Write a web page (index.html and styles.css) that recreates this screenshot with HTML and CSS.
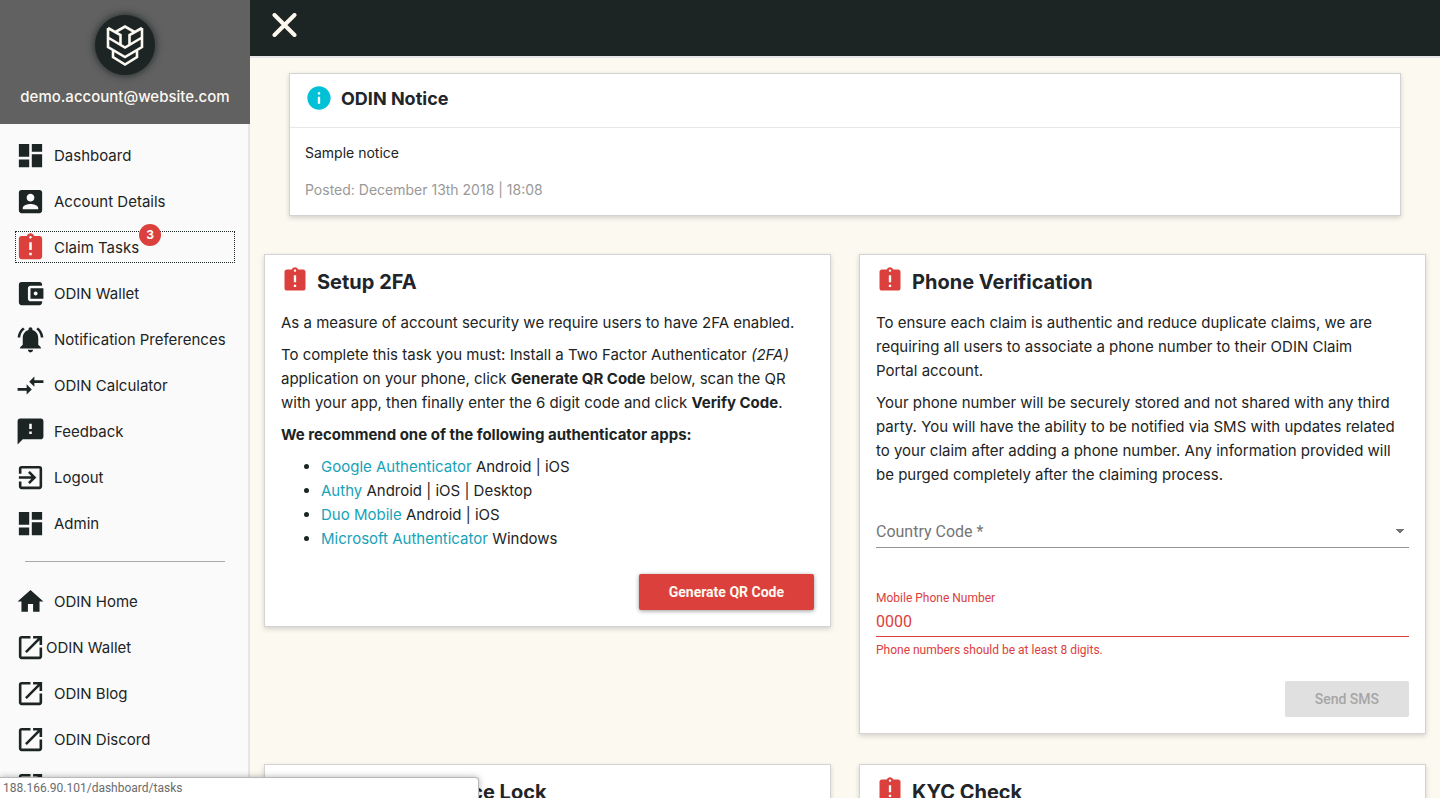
FILE: index.html
```html
<!DOCTYPE html>
<html lang="en">
<head>
<meta charset="utf-8">
<title>ODIN Claim Portal</title>
<link rel="stylesheet" href="styles.css">
</head>
<body>
<svg class="sprite" aria-hidden="true">
  <symbol id="dashboard" viewBox="0 0 24 24"><path d="M3 13h8V3H3v10zm0 8h8v-6H3v6zm10 0h8V11h-8v10zm0-18v6h8V3h-8z"/></symbol>
  <symbol id="account" viewBox="0 0 24 24"><path d="M3 5v14c0 1.100.89 2 2 2h14c1.100 0 2-.9 2-2V5c0-1.100-.9-2-2-2H5c-1.110 0-2 .9-2 2zm12 4c0 1.660-1.340 3-3 3s-3-1.340-3-3 1.340-3 3-3 3 1.340 3 3zm-9 8c0-2 4-3.100 6-3.100s6 1.100 6 3.100v1H6v-1z"/></symbol>
  <symbol id="task" viewBox="0 0 24 24"><path d="M19 3h-4.180C14.400 1.840 13.300 1 12 1c-1.300 0-2.400.84-2.820 2H5c-1.100 0-2 .9-2 2v14c0 1.100.9 2 2 2h14c1.100 0 2-.9 2-2V5c0-1.100-.9-2-2-2zm-6 15h-2v-2h2v2zm0-4h-2V8h2v6zm-1-9c-.55 0-1-.45-1-1s.45-1 1-1 1 .45 1 1-.45 1-1 1z"/></symbol>
  <symbol id="wallet" viewBox="0 0 24 24"><path d="M21 18v1c0 1.100-.9 2-2 2H5c-1.110 0-2-.9-2-2V5c0-1.100.89-2 2-2h14c1.100 0 2 .9 2 2v1h-9c-1.110 0-2 .9-2 2v8c0 1.100.89 2 2 2h9zm-9-2h10V8H12v8zm4-2.500c-.83 0-1.500-.67-1.500-1.500s.67-1.500 1.500-1.500 1.500.67 1.500 1.500-.67 1.500-1.500 1.500z"/></symbol>
  <symbol id="bell" viewBox="0 0 24 24"><path d="M7.580 4.080L6.150 2.650C3.750 4.480 2.170 7.300 2.030 10.500h2c.15-2.650 1.510-4.970 3.550-6.420zm12.390 6.420h2c-.15-3.200-1.730-6.020-4.120-7.850l-1.420 1.430c2.020 1.450 3.390 3.770 3.540 6.420zM18 11c0-3.070-1.640-5.640-4.500-6.320V4c0-.83-.67-1.500-1.500-1.500s-1.500.67-1.500 1.500v.68C7.630 5.360 6 7.920 6 11v5l-2 2v1h16v-1l-2-2v-5zm-6 11c.14 0 .27-.01.4-.04.65-.14 1.180-.58 1.440-1.180.1-.24.15-.5.15-.78h-4c.01 1.100.9 2 2.010 2z"/></symbol>
  <symbol id="compare" viewBox="0 0 24 24"><path d="M9.010 14H2v2h7.010v3L13 15l-3.990-4v3zm5.980-1v-3H22V8h-7.010V5L11 9l3.990 4z"/></symbol>
  <symbol id="feedback" viewBox="0 0 24 24"><path d="M20 2H4c-1.100 0-1.990.9-1.990 2L2 22l4-4h14c1.100 0 2-.9 2-2V4c0-1.100-.9-2-2-2zm-7 12h-2v-2h2v2zm0-4h-2V6h2v4z"/></symbol>
  <symbol id="logout" viewBox="0 0 24 24"><path d="M10.090 15.590L11.500 17l5-5-5-5-1.410 1.410L12.670 11H3v2h9.670l-2.580 2.590zM19 3H5c-1.110 0-2 .9-2 2v4h2V5h14v14H5v-4H3v4c0 1.100.89 2 2 2h14c1.100 0 2-.9 2-2V5c0-1.100-.9-2-2-2z"/></symbol>
  <symbol id="home" viewBox="0 0 24 24"><path d="M10 20v-6h4v6h5v-8h3L12 3 2 12h3v8z"/></symbol>
  <symbol id="external" viewBox="0 0 24 24"><path d="M19 19H5V5h7V3H5c-1.110 0-2 .9-2 2v14c0 1.100.89 2 2 2h14c1.100 0 2-.9 2-2v-7h-2v7zM14 3v2h3.590l-9.830 9.830 1.410 1.410L19 6.410V10h2V3h-7z"/></symbol>
  <symbol id="info" viewBox="0 0 24 24"><path d="M12 2C6.480 2 2 6.480 2 12s4.480 10 10 10 10-4.480 10-10S17.520 2 12 2zm1 15h-2v-6h2v6zm0-8h-2V7h2v2z"/></symbol>
</svg>
<div class="app">
  <aside class="sidebar">
    <header class="profile">
      <div class="avatar">
        <svg class="logo" viewBox="0 0 60 60" aria-label="ODIN"><path d="M13 13L25.500 20V30M47 13L34.500 20V30M13 13V32L30 42 47 32V13M13 22.500L30 32.500 47 22.500M20.500 17L30 11.500 39.500 17M18 36V42L30 49.500 42 42V36"/></svg>
      </div>
      <span class="email">demo.account@website.com</span>
    </header>
    <nav class="nav">
      <a class="link" href="#"><svg><use href="#dashboard"/></svg><span>Dashboard</span></a>
      <a class="link" href="#"><svg><use href="#account"/></svg><span>Account Details</span></a>
      <a class="link focused" href="#"><svg class="alert"><use href="#task"/></svg><span>Claim Tasks<b class="badge">3</b></span></a>
      <a class="link" href="#"><svg><use href="#wallet"/></svg><span>ODIN Wallet</span></a>
      <a class="link" href="#"><svg><use href="#bell"/></svg><span>Notification Preferences</span></a>
      <a class="link" href="#"><svg><use href="#compare"/></svg><span>ODIN Calculator</span></a>
      <a class="link" href="#"><svg><use href="#feedback"/></svg><span>Feedback</span></a>
      <a class="link" href="#"><svg><use href="#logout"/></svg><span>Logout</span></a>
      <a class="link" href="#"><svg><use href="#dashboard"/></svg><span>Admin</span></a>
      <hr class="divider">
      <a class="link" href="#"><svg><use href="#home"/></svg><span>ODIN Home</span></a>
      <a class="link tight" href="#"><svg><use href="#external"/></svg><span>ODIN Wallet</span></a>
      <a class="link" href="#"><svg><use href="#external"/></svg><span>ODIN Blog</span></a>
      <a class="link" href="#"><svg><use href="#external"/></svg><span>ODIN Discord</span></a>
      <a class="link" href="#" aria-label="External link"><svg><use href="#external"/></svg></a>
    </nav>
  </aside>
  <div class="page">
    <header class="topbar">
      <button class="close" type="button" aria-label="Close menu"><svg viewBox="0 0 24 24"><path d="M2 2L22 22M22 2L2 22"/></svg></button>
    </header>
    <main class="content">
      <section class="card notice">
        <div class="notice-head"><svg class="icon info"><use href="#info"/></svg><h2>ODIN Notice</h2></div>
        <div class="notice-body">
          <p>Sample notice</p>
          <p class="posted">Posted: December 13th 2018 | 18:08</p>
        </div>
      </section>
      <div class="tasks">
        <section class="card task">
          <div class="task-head"><svg class="icon alert"><use href="#task"/></svg><h2>Setup 2FA</h2></div>
          <p>As a measure of account security we require users to have 2FA enabled.</p>
          <p>To complete this task you must: Install a Two Factor Authenticator <em>(2FA)</em> application on your phone, click <strong>Generate QR Code</strong> below, scan the QR with your app, then finally enter the 6 digit code and click <strong>Verify Code</strong>.</p>
          <p><strong>We recommend one of the following authenticator apps:</strong></p>
          <ul>
            <li><a href="#">Google Authenticator</a> Android | iOS</li>
            <li><a href="#">Authy</a> Android | iOS | Desktop</li>
            <li><a href="#">Duo Mobile</a> Android | iOS</li>
            <li><a href="#">Microsoft Authenticator</a> Windows</li>
          </ul>
          <div class="actions"><button class="button primary" type="button">Generate QR Code</button></div>
        </section>
        <section class="card task">
          <div class="task-head"><svg class="icon alert"><use href="#task"/></svg><h2>Phone Verification</h2></div>
          <p>To ensure each claim is authentic and reduce duplicate claims, we are requiring all users to associate a phone number to their ODIN Claim Portal&nbsp;account.</p>
          <p>Your phone number will be securely stored and not shared with any third party. You will have the ability to be notified via SMS with updates related to your claim after adding a phone number. Any information provided will be purged completely after the claiming process.</p>
          <form class="form">
            <select class="field country" aria-label="Country Code" required><option>Country Code *</option></select>
            <label class="label" for="phone">Mobile Phone Number</label>
            <input class="field phone" id="phone" type="text" value="0000" aria-describedby="phone-error">
            <span class="error" id="phone-error">Phone numbers should be at least 8 digits.</span>
            <div class="actions"><button class="button" type="button" disabled>Send SMS</button></div>
          </form>
        </section>
        <section class="card task">
          <div class="task-head"><svg class="icon alert"><use href="#task"/></svg><h2>Withdraw Balance Lock</h2></div>
        </section>
        <section class="card task">
          <div class="task-head"><svg class="icon alert"><use href="#task"/></svg><h2>KYC Check</h2></div>
        </section>
      </div>
    </main>
  </div>
  <div class="status">188.166.90.101/dashboard/tasks</div>
</div>
</body>
</html>
```
FILE: styles.css
```css
* { box-sizing: border-box; }
body {
  margin: 0;
  font: 15px/24px Inter, "Liberation Sans", sans-serif;
  color: #1c2424;
  background: #fcf9f1;
}
h2, p, ul { margin: 0; }
h2 { font-size: 20px; line-height: 32px; color: #212529; }
svg { flex: none; fill: currentColor; }
.sprite { position: absolute; width: 0; height: 0; }
.app { display: flex; height: 100vh; overflow: hidden; }

.sidebar {
  flex: none;
  width: 250px;
  overflow: hidden;
  background: linear-gradient(to left, #e6e6e8 2px, #fafafa 2px);
}
.profile {
  display: flex;
  flex-direction: column;
  align-items: center;
  gap: 10px;
  height: 124px;
  padding-top: 15px;
  background: #616161;
  color: #fcf8f0;
}
.avatar {
  width: 60px;
  height: 60px;
  border-radius: 50%;
  background: #1c2424;
  box-shadow: 0 0 8px #1c2424;
}
.logo { display: block; fill: none; stroke: #fcf8f0; stroke-width: 2.600; }
.email { font-weight: 500; }
.nav {
  display: flex;
  flex-direction: column;
  gap: 14px;
  padding: 15px;
}
.link {
  display: flex;
  align-items: center;
  gap: 8px;
  height: 32px;
  color: #1c2424;
  text-decoration: none;
  white-space: nowrap;
}
.link svg { width: 31px; height: 31px; }
.link span { position: relative; padding-top: 2px; }
.link.tight { gap: 0; }
.focused { outline: 1px dotted #1c2424; outline-offset: -1px; }
.link .alert, .alert { color: #db403c; }
.badge {
  position: absolute;
  left: 100%;
  top: -10px;
  width: 22px;
  height: 22px;
  border-radius: 50%;
  background: #db403c;
  color: #fff;
  font-size: 12px;
  line-height: 22px;
  text-align: center;
}
.divider {
  width: 200px;
  margin: 8px auto 9px;
  border: 0;
  border-top: 1px solid #a8a8a8;
}

.page { flex: 1; min-width: 0; }
.topbar {
  height: 58px;
  padding: 13px 22px;
  background: #1c2424;
  border-bottom: 2px solid #e6e6e8;
}
.close {
  display: block;
  padding: 0;
  border: 0;
  background: none;
  color: #fcf8f0;
}
.close svg {
  display: block;
  width: 25px;
  height: 24px;
  fill: none;
  stroke: currentColor;
  stroke-width: 4;
  stroke-linecap: round;
}
.content { padding: 15px 14px; }
.card {
  background: #fff;
  border: 1px solid #d3d3d3;
  box-shadow: 0 2px 5px rgba(0, 0, 0, .16);
}
.icon { width: 28px; height: 28px; }
.notice { margin: 0 25px 38px; }
.notice-head {
  display: flex;
  gap: 8px;
  height: 54px;
  padding: 10px 15px;
  border-bottom: 1px solid #e8e8e8;
}
.notice-head h2 { font-size: 18px; line-height: 30px; }
.info { color: #00c1d5; }
.notice-body {
  display: grid;
  gap: 13px;
  padding: 13px 15px;
  font-size: 14px;
}
.posted { color: #999; }
.tasks {
  display: grid;
  grid-template-columns: 1fr 1fr;
  gap: 30px 28px;
  align-items: start;
}
.task { padding: 11px 16px 16px; }
.task-head { display: flex; gap: 8px; margin-bottom: 13px; }
.task p { margin-bottom: 8px; }
.task ul { padding-left: 40px; }
.task a { color: #17a2b8; text-decoration: none; }
.actions { display: flex; justify-content: flex-end; padding-top: 23px; }
.button {
  height: 36px;
  padding: 0 30px;
  border: 0;
  border-radius: 2px;
  background: #e0e0e0;
  color: #a6a6a6;
  font: 500 14px Roboto, sans-serif;
}
.primary {
  background: #db403c;
  color: #fcf8f0;
  font-weight: 700;
  box-shadow: 0 1px 4px rgba(0, 0, 0, .4);
}
.form {
  display: flex;
  flex-direction: column;
  padding-top: 21px;
  font-family: Roboto, "Liberation Sans", sans-serif;
}
.field {
  width: 100%;
  height: 32px;
  padding: 0;
  border: 0;
  border-bottom: 1px solid #949494;
  border-radius: 0;
  background: none;
  color: #757575;
  font: 16px/24px Roboto, sans-serif;
}
.country {
  appearance: none;
  background: conic-gradient(from -45deg at 50% 100%, #757575 90deg, transparent 0) no-repeat right 4px top 13px / 10px 5px;
}
.label {
  margin-top: 42px;
  color: #db403c;
  font-size: 12px;
  line-height: 16px;
}
.phone { height: 31px; border-color: #db403c; color: #db403c; }
.error { margin-top: 5px; color: #db403c; font-size: 12px; line-height: 16px; }

.status {
  position: absolute;
  left: 0;
  bottom: 0;
  width: 479px;
  height: 21px;
  padding-left: 3px;
  border: 1px solid #b8b8b8;
  border-width: 1px 1px 0 0;
  border-radius: 0 4px 0 0;
  background: #fff;
  box-shadow: 0 0 6px rgba(0, 0, 0, .3);
  color: #6b6b6b;
  font-family: Roboto, "Liberation Sans", sans-serif;
  font-size: 12px;
  line-height: 20px;
}
```
